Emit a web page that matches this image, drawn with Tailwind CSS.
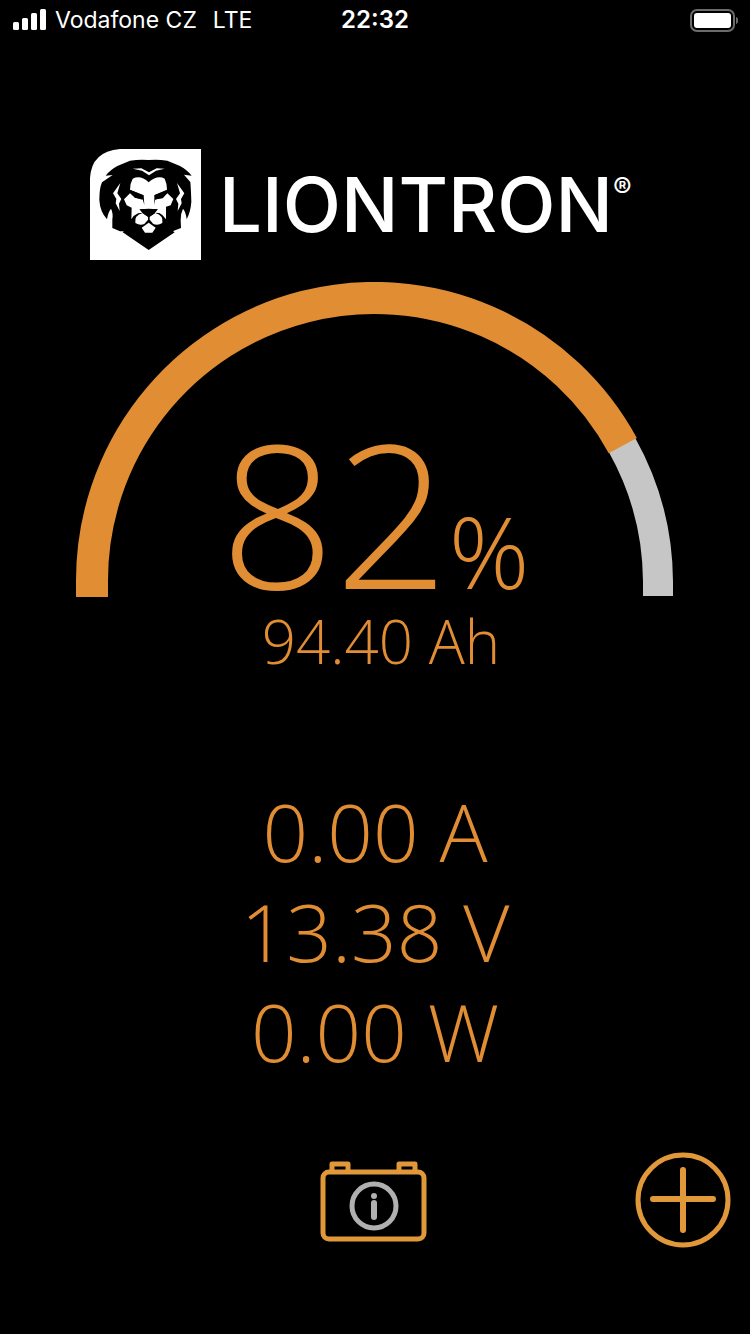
<!DOCTYPE html>
<html lang="en">
  <head>
    <meta charset="UTF-8" />
    <title>Liontron</title>
    <meta name="viewport" content="width=device-width, initial-scale=1.0" />
    <script src="https://cdn.jsdelivr.net/npm/@tailwindcss/browser@4"></script>
  </head>
  <body class="flex min-h-screen flex-col bg-black font-['Open_Sans',sans-serif] text-[#e18d34]">
    <!-- Status bar -->
    <header
      class="grid h-10 grid-cols-3 items-center px-3 font-['Inter',sans-serif] text-[23px] text-white"
    >
      <div class="flex items-center gap-2 whitespace-nowrap">
        <svg class="h-[22px] w-[35px] shrink-0" viewBox="0 0 35 22" fill="currentColor" aria-hidden="true">
          <rect x="1" y="13" width="6" height="8" rx="1.5" />
          <rect x="10" y="9" width="6" height="12" rx="1.5" />
          <rect x="19" y="4" width="6" height="17" rx="1.5" />
          <rect x="28" y="0" width="6" height="21" rx="1.5" />
        </svg>
        <span>Vodafone CZ</span>
        <span class="ml-2">LTE</span>
      </div>
      <time class="text-center text-[24px] font-semibold">22:32</time>
      <svg class="h-6 w-[48px] justify-self-end" viewBox="0 0 48 24" role="img" aria-label="Battery full">
        <rect x="1" y="2" width="43" height="21" rx="6" fill="none" stroke="#6b6b6b" stroke-width="2" />
        <rect x="4" y="5" width="37" height="15" rx="3" fill="#fff" />
        <path d="M46 9c3 1 3 6 0 7z" fill="#6b6b6b" />
      </svg>
    </header>

    <main class="flex grow flex-col">
      <!-- Brand -->
      <div class="mt-[108px] flex h-[112px] items-center gap-[18px] pl-[12%] text-white">
        <svg class="size-[111px] shrink-0" viewBox="30 27 333 333" role="img" aria-label="Lion head">
          <path d="M30 360V115Q34 34 120 27H363V360z" fill="#fff" />
          <path
            d="M150 62Q180 57 206 60Q232 57 262 62L300 78Q322 90 335 107L312 104L331 126Q333 150 334 185Q332 215 320 238Q318 217 309 206Q301 222 302 240L303 264L278 274L270 267L284 277L206 330L128 277L142 265L134 273L120 274L97 264L97 238Q100 220 93 206Q84 217 81 238Q60 215 58 180Q58 145 66 127L98 105L77 107Q90 90 112 78z"
            fill="#000"
          />
          <g fill="#fff">
            <path d="M158 86L184 85L207 97L230 85L254 86L228 92L207 106L186 92z" />
            <path
              d="M158 116Q182 104 206 127Q232 104 254 116Q261 130 261 149L224 165L222 195L226 178L248 175L262 160L280 177L272 196L258 200L258 238Q250 224 238 219L224 218L232 208Q206 204 180 208L188 218L174 220Q160 226 154 238L155 203L140 196L132 178L150 160L165 173L188 177L193 195L191 166L150 149Q150 130 158 116z"
            />
            <path d="M121 129L99 160L109 177L107 190L119 213L117 191L124 177L112 160z" />
            <path d="M291 129L313 160L303 177L305 190L293 213L295 191L288 177L300 160z" />
            <path d="M188 219L204 230V239L193 252Q180 258 166 249Q162 226 188 219z" />
            <path d="M226 219L209 230V239L220 252Q233 258 247 249Q251 226 226 219z" />
            <path d="M185 263L206 248L227 263L217 278H195z" />
          </g>
          <path
            d="M142 147L190 166L188 179L165 173zM271 147L223 166L225 179L248 173zM178 208H234L221 222L206 232L191 222z"
            fill="#000"
          />
        </svg>
        <div class="flex items-start">
          <span class="font-['Inter',sans-serif] text-[76px] font-medium leading-[80px]">LIONTRON</span>
          <span class="mt-3 font-['Inter',sans-serif] text-[28px] font-medium leading-6">®</span>
        </div>
      </div>

      <!-- State of charge -->
      <section class="mt-[22px] grid justify-items-center">
        <svg
          class="col-start-1 row-start-1 w-4/5"
          viewBox="0 0 600 315"
          fill="none"
          role="img"
          aria-label="State of charge 82 percent"
        >
          <path d="M547 163A282.5 282.5 0 0 1 583 299V314" stroke="#c6c6c6" stroke-width="30" />
          <path d="M17 315V298.5A282.5 282.5 0 0 1 547.8 163.7" stroke="currentColor" stroke-width="32" />
        </svg>
        <p
          class="col-start-1 row-start-1 flex items-baseline self-end text-[200px] font-light leading-[160px]"
        >
          82<span class="text-[100px] leading-[94px]">%</span>
        </p>
      </section>
      <p class="mt-1 pl-3 text-center text-[60px] font-light leading-[80px]">94.40 Ah</p>

      <!-- Readings -->
      <ul class="mt-[100px] text-center text-[80px] font-light leading-[100px]">
        <li>0.00 A</li>
        <li>13.38 V</li>
        <li>0.00 W</li>
      </ul>
    </main>

    <footer class="grid grid-cols-3 items-center pb-[85px] pl-4 pr-[18px]">
      <button type="button" class="col-start-2 justify-self-center" aria-label="Battery info">
        <svg class="h-[82px] w-[108px]" viewBox="0 0 108 82" fill="none" stroke="#e0983a" stroke-width="5">
          <rect x="3" y="12" width="101" height="67" rx="6" />
          <path d="M12 11V4H28V11M79 11V4H95V11" stroke-linejoin="round" />
          <g stroke="#b0b0b0">
            <circle cx="54" cy="46" r="22" />
            <path d="M54 43V57" stroke-width="6" stroke-linecap="round" />
            <circle cx="54" cy="36" r="3" fill="#b0b0b0" stroke="none" />
          </g>
        </svg>
      </button>
      <button type="button" class="justify-self-end" aria-label="Add battery">
        <svg class="size-[97px]" viewBox="0 0 97 97" fill="none" stroke="#e0983a" stroke-linecap="round">
          <circle cx="48" cy="48" r="45" stroke-width="5" />
          <path d="M48 18V78M18 47H78" stroke-width="6" />
        </svg>
      </button>
    </footer>
  </body>
</html>
